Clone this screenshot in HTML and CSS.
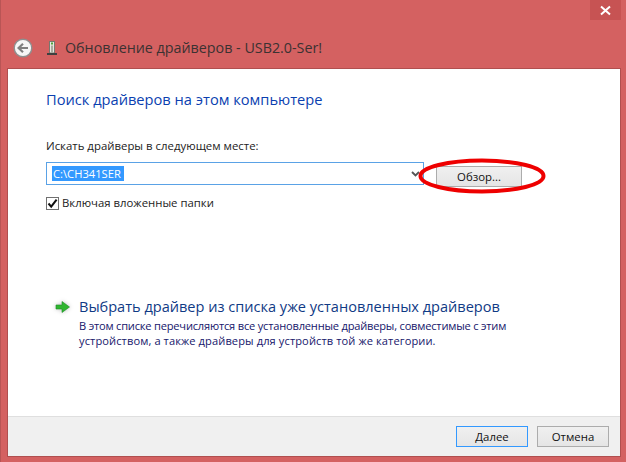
FILE: index.html
```html
<!DOCTYPE html>
<html lang="ru">
<head>
<meta charset="utf-8">
<title>Обновление драйверов</title>
<link rel="stylesheet" href="styles.css">
</head>
<body>
<div class="window">
  <div class="topbar">
    <div class="close"><svg width="11" height="11" viewBox="0 0 11 11"><path d="M1 1.5 L10 9.5 M10 1.5 L1 9.5" stroke="#fff" stroke-width="2" fill="none"/></svg></div>
  </div>
  <div class="titlerow">
    <svg class="back" width="20" height="20" viewBox="0 0 20 20">
      <circle cx="10" cy="10" r="8.8" fill="#f6f6f6" stroke="#8f8f8f" stroke-width="1.4"/>
      <path d="M15 10 H6 M10 5.8 L5.6 10 L10 14.2" stroke="#808080" stroke-width="2.2" fill="none"/>
    </svg>
    <svg class="device" width="12" height="17" viewBox="0 0 12 17">
      <rect x="3.5" y="2.5" width="5" height="11.5" fill="#e8e8e0" stroke="#77786f"/>
      <rect x="5" y="3.5" width="2" height="2" fill="#4fa33a"/>
      <rect x="5" y="6.5" width="2" height="7.5" fill="#a9aba0"/>
      <rect x="1" y="14" width="10" height="2" fill="#3f4040"/>
    </svg>
    <span class="title">Обновление драйверов - USB2.0-Ser!</span>
  </div>
  <div class="client">
    <main class="content">
      <h1 class="heading">Поиск драйверов на этом компьютере</h1>
      <label class="fieldlabel">Искать драйверы в следующем месте:</label>
      <div class="pathrow">
        <div class="combo">
          <span class="selected">C:\CH341SER</span>
          <svg class="chev" width="9" height="6" viewBox="0 0 9 6"><path d="M1 1 L4.5 4.5 L8 1" stroke="#555" stroke-width="1.8" fill="none"/></svg>
        </div>
        <button class="btn browse">Обзор...</button>
        <svg class="ring" width="132" height="40" viewBox="0 0 132 40"><ellipse cx="66" cy="20" rx="61.5" ry="15.5" fill="none" stroke="#ee0000" stroke-width="4"/></svg>
      </div>
      <div class="check">
        <span class="box"><svg width="11" height="11" viewBox="0 0 11 11"><path d="M1.5 5.5 L4.2 8.6 L9.6 1.6" stroke="#111" stroke-width="2" fill="none"/></svg></span>
        <span>Включая вложенные папки</span>
      </div>
      <div class="option">
        <svg class="arrow" width="16" height="14" viewBox="0 0 16 14"><path d="M1 5 H7 V1.5 L14.5 7 L7 12.5 V9 H1 Z" fill="#2fb52f" stroke="#1d8f25" stroke-width=".6"/></svg>
        <div class="optiontext">
          <div class="optiontitle">Выбрать драйвер из списка уже установленных драйверов</div>
          <div class="optiondesc">
            <div class="descline1">В этом списке перечисляются все установленные драйверы, совместимые с этим</div>
            <div class="descline2">устройством, а также драйверы для устройств той же категории.</div>
          </div>
        </div>
      </div>
    </main>
    <footer class="footer">
      <button class="btn primary">Далее</button>
      <button class="btn">Отмена</button>
    </footer>
  </div>
</div>
</body>
</html>
```

FILE: styles.css
```css
* { box-sizing: border-box; }
html, body { margin: 0; padding: 0; }
body { width: 626px; height: 462px; overflow: hidden; font-family: "Open Sans", "Noto Sans", sans-serif; }
.window {
  width: 626px; height: 462px; background: #d46161;
  display: flex; flex-direction: column;
  border-left: 1px solid #b95555; border-right: 1px solid #d46161;
  padding: 0 4px 5px 6px;
}
.topbar { height: 20px; flex: none; display: flex; justify-content: flex-end; }
.close { width: 31px; height: 20px; background: #c75353; display: flex; align-items: center; justify-content: center; }
.titlerow { height: 48px; flex: none; display: flex; align-items: center; padding-left: 6px; padding-top: 7px; }
.back { flex: none; }
.device { flex: none; margin-left: 13px; }
.title { margin-left: 7px; font-size: 14.3px; color: #3b3232; white-space: nowrap; }
.client { flex: 1; display: flex; flex-direction: column; background: #fff; border: 1px solid #b04f4f; }
.content { flex: 1; padding: 19px 0 0 38px; }
.heading { margin: 0; font-size: 14.65px; font-weight: 400; color: #0b3fb0; line-height: 22px; }
.fieldlabel { display: block; margin-top: 28px; font-size: 11.4px; line-height: 16px; color: #222; }
.pathrow { position: relative; display: flex; align-items: flex-start; margin-top: 8px; width: 476px; height: 25px; justify-content: space-between; }
.combo { width: 378px; height: 23px; border: 1px solid #5aa2e6; display: flex; align-items: center; justify-content: space-between; padding: 0 3px 0 5px; }
.selected { background: #3399ff; color: #fff; font-size: 11.2px; line-height: 15px; padding: 0 3px 0 1px; }
.browse { width: 86px; height: 21px; margin-top: 4px; }
.btn { background: linear-gradient(#f0f0f0, #e5e5e5); border: 1px solid #acacac; font: inherit; font-size: 11.4px; color: #111; padding: 0; }
.ring { position: absolute; left: 369.5px; top: -6.5px; }
.check { display: flex; align-items: center; margin-top: 8px; font-size: 11.35px; color: #222; line-height: 16px; }
.box { width: 13px; height: 13px; border: 1px solid #707070; margin-right: 3px; display: flex; align-items: center; justify-content: center; background: #fff; }
.option { display: flex; margin-top: 85px; margin-left: 9px; }
.arrow { flex: none; margin-top: 4px; filter: drop-shadow(0 0 2px #bbb); }
.optiontext { margin-left: 8px; }
.optiontitle { font-size: 14.55px; line-height: 21px; color: #103a85; white-space: nowrap; }
.optiondesc { font-size: 11.1px; line-height: 14.5px; color: #16166b; white-space: nowrap; margin-top: 2px; }
.descline1 { letter-spacing: -0.2px; }
.descline2 { letter-spacing: 0.1px; }
.footer { height: 40px; flex: none; background: #f0f0f0; border-top: 1px solid #dfdfdf; display: flex; justify-content: flex-end; gap: 9px; padding: 9px 11px 0 0; }
.footer .btn { width: 72px; height: 21px; }
.primary { border: 1px solid #3399ff; }
```
